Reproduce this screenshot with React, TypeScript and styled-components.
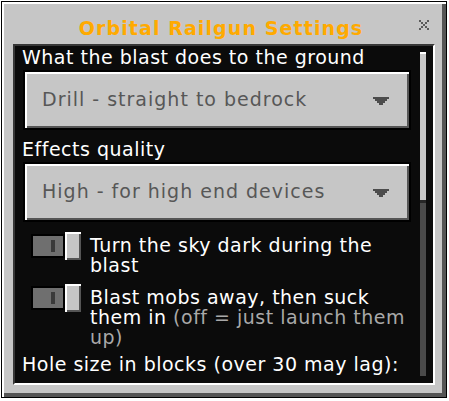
import React from "react";
import styled, { createGlobalStyle } from "styled-components";

const GlobalStyle = createGlobalStyle`
  html, body {
    margin: 0;
    padding: 0;
    background: #ffffff;
    width: 449px;
    height: 401px;
    overflow: hidden;
  }
  * { box-sizing: border-box; }
`;

const Dialog = styled.div`
  margin: 1px 0 0 1px;
  width: 446px;
  height: 397px;
  border: 1px solid #000;
  background: #c6c6c6;
  box-shadow: inset 2px 2px 0 #ffffff, inset -4px -4px 0 #555555;
  display: flex;
  flex-direction: column;
  padding: 0 11px 12px 11px;
  font-family: "DejaVu Sans", "Liberation Sans", sans-serif;
`;

const TitleBar = styled.div`
  height: 42px;
  flex-shrink: 0;
  display: grid;
  grid-template-columns: 1fr auto 1fr;
  align-items: start;
  margin: 0 6px 0 0;
`;

const Title = styled.div`
  grid-column: 2;
  margin-top: 16px;
  color: #ffaa00;
  font-weight: bold;
  font-size: 19px;
  line-height: 20px;
  letter-spacing: 1.1px;
  white-space: nowrap;
`;

const Close = styled.button`
  grid-column: 3;
  justify-self: end;
  margin-top: 18px;
  width: 10px;
  height: 10px;
  padding: 0;
  border: 0;
  background: transparent;
  display: block;
  cursor: pointer;
  svg { display: block; }
`;

const Panel = styled.div`
  flex: 1;
  min-height: 0;
  display: flex;
  background: #0b0b0b;
  border-style: solid;
  border-width: 2px;
  border-color: #373737 #ffffff #ffffff #373737;
  overflow: hidden;
`;

const Scroll = styled.div`
  flex: 1;
  min-width: 0;
  overflow: hidden;
  margin-bottom: 8px;
  padding: 1px 0 0 8px;
  display: flex;
  flex-direction: column;
`;

const Label = styled.div<{ $top?: number }>`
  margin: ${(p) => p.$top ?? 0}px 0 3px -1px;
  color: #ffffff;
  font-size: 19px;
  line-height: 20px;
  letter-spacing: 0.5px;
  white-space: nowrap;
  flex-shrink: 0;
`;

const Dropdown = styled.div`
  height: 60px;
  flex-shrink: 0;
  border: 2px solid #000;
  background: #c6c6c6;
  box-shadow: inset 2px 2px 0 #ffffff, inset -2px -2px 0 #555555;
  display: flex;
  align-items: center;
  justify-content: space-between;
  padding: 0 20px 2px 17px;
  cursor: pointer;
`;

const DropText = styled.span`
  color: #575757;
  font-size: 19px;
  line-height: 20px;
  letter-spacing: 1px;
  white-space: nowrap;
`;

const Arrow = styled.svg`
  display: block;
  margin-top: 4px;
`;

const ToggleRow = styled.div<{ $top: number }>`
  margin-top: ${(p) => p.$top}px;
  display: flex;
  align-items: flex-start;
  flex-shrink: 0;
`;

const Toggle = styled.div`
  margin-left: 8px;
  display: flex;
  align-items: center;
  flex-shrink: 0;
  height: 28px;
`;

const Track = styled.div`
  width: 34px;
  height: 24px;
  border: 2px solid #000;
  background: #6f6f6f;
  display: flex;
  align-items: center;
  justify-content: flex-end;
  padding-right: 8px;
`;

const Indicator = styled.div`
  width: 4px;
  height: 12px;
  background: #3a3a3a;
`;

const Knob = styled.div`
  width: 16px;
  height: 28px;
  background: #c6c6c6;
  box-shadow: inset 2px 2px 0 #ffffff, inset -2px -2px 0 #555555;
`;

const ToggleText = styled.div`
  margin-left: 9px;
  padding-top: 3px;
  color: #ffffff;
  font-size: 19px;
  line-height: 20px;
  letter-spacing: 0.5px;
`;

const Hint = styled.span`
  color: #a9a9a9;
`;

const Value = styled.div`
  color: #ffffff;
  font-size: 19px;
  line-height: 20px;
  letter-spacing: 0.5px;
  margin: -3px 0 0 1px;
  flex-shrink: 0;
`;

const ScrollTrack = styled.div`
  width: 6px;
  margin: 6px 7px 7px 9px;
  background: #4a4a4a;
  display: flex;
  flex-direction: column;
  flex-shrink: 0;
`;

const Thumb = styled.div`
  height: 151px;
  background: #c6c6c6;
  border-top: 2px solid #ffffff;
  border-bottom: 3px solid #262626;
`;

const DownArrow = () => (
  <Arrow width="16" height="8" viewBox="0 0 16 8" shapeRendering="crispEdges">
    <polygon
      points="0,0 16,0 16,2 14,2 14,4 12,4 12,6 10,6 10,8 6,8 6,6 4,6 4,4 2,4 2,2 0,2"
      fill="#4c4c4c"
    />
  </Arrow>
);

const CloseIcon = () => (
  <svg width="10" height="10" viewBox="0 0 10 10" shapeRendering="crispEdges">
    {[
      [0, 0], [8, 0], [2, 2], [6, 2], [4, 4], [2, 6], [6, 6], [0, 8], [8, 8],
    ].map(([x, y]) => (
      <rect key={`${x}-${y}`} x={x} y={y} width="2" height="2" fill="#5a5a5a" />
    ))}
  </svg>
);

const Switch = () => (
  <Toggle>
    <Track>
      <Indicator />
    </Track>
    <Knob />
  </Toggle>
);

export default function App() {
  return (
    <>
      <GlobalStyle />
      <Dialog>
        <TitleBar>
          <Title>Orbital Railgun Settings</Title>
          <Close aria-label="Close">
            <CloseIcon />
          </Close>
        </TitleBar>
        <Panel>
          <Scroll>
            <Label>What the blast does to the ground</Label>
            <Dropdown>
              <DropText>Drill - straight to bedrock</DropText>
              <DownArrow />
            </Dropdown>
            <Label $top={9}>Effects quality</Label>
            <Dropdown>
              <DropText>High - for high end devices</DropText>
              <DownArrow />
            </Dropdown>
            <ToggleRow $top={10}>
              <Switch />
              <ToggleText>Turn the sky dark during the blast</ToggleText>
            </ToggleRow>
            <ToggleRow $top={9}>
              <Switch />
              <ToggleText>
                Blast mobs away, then suck them in <Hint>(off = just launch them up)</Hint>
              </ToggleText>
            </ToggleRow>
            <Label $top={7}>Hole size in blocks (over 30 may lag):</Label>
            <Value>30</Value>
          </Scroll>
          <ScrollTrack>
            <Thumb />
          </ScrollTrack>
        </Panel>
      </Dialog>
    </>
  );
}
